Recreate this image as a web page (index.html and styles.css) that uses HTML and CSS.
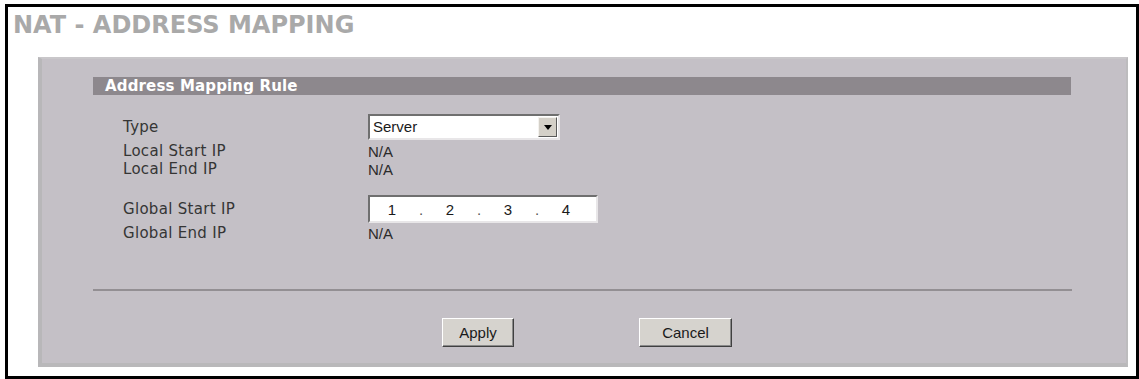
FILE: index.html
```html
<!DOCTYPE html>
<html>
<head>
<meta charset="utf-8">
<link rel="stylesheet" href="styles.css">
</head>
<body>
<div class="frame">
  <h1 class="title">NAT - ADDRESS MAPPING</h1>
  <div class="panel">
    <div class="inner">
      <div class="bar">Address Mapping Rule</div>
      <div class="form">
        <div class="row row-select">
          <div class="label">Type</div>
          <div class="value">
            <div class="select">
              <span class="select-text">Server</span>
              <span class="arrow"><span class="tri"></span></span>
            </div>
          </div>
        </div>
        <div class="row row-text gap-2">
          <div class="label">Local Start IP</div>
          <div class="value text">N/A</div>
        </div>
        <div class="row row-text">
          <div class="label">Local End IP</div>
          <div class="value text">N/A</div>
        </div>
        <div class="row row-input gap-17">
          <div class="label">Global Start IP</div>
          <div class="value">
            <div class="ip">
              <span class="seg">1</span><span class="dot">.</span><span class="seg">2</span><span class="dot">.</span><span class="seg">3</span><span class="dot">.</span><span class="seg">4</span>
            </div>
          </div>
        </div>
        <div class="row row-text gap-1">
          <div class="label">Global End IP</div>
          <div class="value text">N/A</div>
        </div>
      </div>
      <div class="sep"></div>
      <div class="buttons">
        <button class="btn btn-apply">Apply</button>
        <button class="btn btn-cancel">Cancel</button>
      </div>
    </div>
  </div>
</div>
</body>
</html>
```
FILE: styles.css
```css
html, body {
  margin: 0;
  padding: 0;
  background: #ffffff;
}

.frame {
  box-sizing: border-box;
  width: 1134px;
  height: 375px;
  margin: 4px 0 0 5px;
  border: 3px solid #000000;
  background: #ffffff;
  overflow: hidden;
}

.title {
  margin: 4px 0 0 5px;
  font-family: "DejaVu Sans", Verdana, sans-serif;
  font-weight: bold;
  font-size: 24px;
  line-height: 28px;
  color: #a9a9a9;
}

.panel {
  margin: 18px 8px 0 30px;
  background: #c4c0c6;
  border-top: 2px solid #c9c7ca;
  border-left: 4px solid #b8b7b9;
  border-right: 2px solid #bdbcbe;
  border-bottom: 4px solid #b9b8ba;
}

.inner {
  margin: 0 55px 0 51px;
  padding: 18px 0 16px 0;
}

.bar {
  height: 18px;
  line-height: 18px;
  background: #8d888d;
  color: #ffffff;
  font-family: "DejaVu Sans", Verdana, sans-serif;
  font-weight: bold;
  font-size: 15px;
  padding-left: 12px;
  letter-spacing: 0.15px;
}

.form {
  margin-top: 18px;
  padding-left: 30px;
}

.row {
  display: flex;
  align-items: center;
}

.row-select { height: 27px; }
.row-text { height: 18px; }
.row-input { height: 28px; }
.gap-2 { margin-top: 2px; }
.gap-17 { margin-top: 17px; }
.gap-1 { margin-top: 1px; }

.label {
  width: 245px;
  font-family: "DejaVu Sans", Verdana, sans-serif;
  font-size: 15px;
  color: #353535;
  letter-spacing: 0.3px;
}

.value {
  font-family: "Liberation Sans", Arial, sans-serif;
  font-size: 15px;
  color: #2b2b2b;
}

.select {
  box-sizing: border-box;
  width: 192px;
  height: 26px;
  background: #ffffff;
  border-top: 2px solid #6f6f6f;
  border-left: 2px solid #6f6f6f;
  border-bottom: 2px solid #e8e6e8;
  border-right: 2px solid #e8e6e8;
  display: flex;
  align-items: center;
  justify-content: space-between;
}

.select-text {
  padding-left: 3px;
  color: #1a1a1a;
}

.arrow {
  box-sizing: border-box;
  width: 19px;
  height: 20px;
  margin-right: 1px;
  background: #d4d0c8;
  border-top: 1px solid #f4f2ee;
  border-left: 1px solid #f4f2ee;
  border-bottom: 1px solid #5a5a5a;
  border-right: 1px solid #5a5a5a;
  display: flex;
  align-items: center;
  justify-content: center;
}

.tri {
  width: 0;
  height: 0;
  border-left: 4px solid transparent;
  border-right: 4px solid transparent;
  border-top: 5px solid #000000;
  margin-top: 1px;
}

.ip {
  box-sizing: border-box;
  width: 230px;
  height: 28px;
  background: #ffffff;
  border-top: 2px solid #6f6f6f;
  border-left: 2px solid #6f6f6f;
  border-bottom: 2px solid #e8e6e8;
  border-right: 2px solid #e8e6e8;
  display: flex;
  align-items: center;
  padding-left: 2px;
  color: #1a1a1a;
}

.seg {
  width: 40px;
  text-align: center;
}

.dot {
  width: 18px;
  text-align: center;
  color: #555555;
}

.sep {
  margin-top: 47px;
  border-top: 2px solid #938f93;
  margin-right: -1px;
}

.buttons {
  margin-top: 27px;
  display: flex;
  padding-left: 349px;
}

.btn {
  box-sizing: border-box;
  height: 29px;
  padding: 0;
  background: #d6d3ce;
  font-family: "Liberation Sans", Arial, sans-serif;
  font-size: 15px;
  color: #1a1a1a;
  border-top: 1px solid #ffffff;
  border-left: 1px solid #ffffff;
  border-bottom: 1px solid #404040;
  border-right: 1px solid #404040;
  box-shadow: inset -1px -1px 0 #8a8a8a;
}

.btn-apply { width: 72px; }
.btn-cancel { width: 93px; margin-left: 125px; }
```
